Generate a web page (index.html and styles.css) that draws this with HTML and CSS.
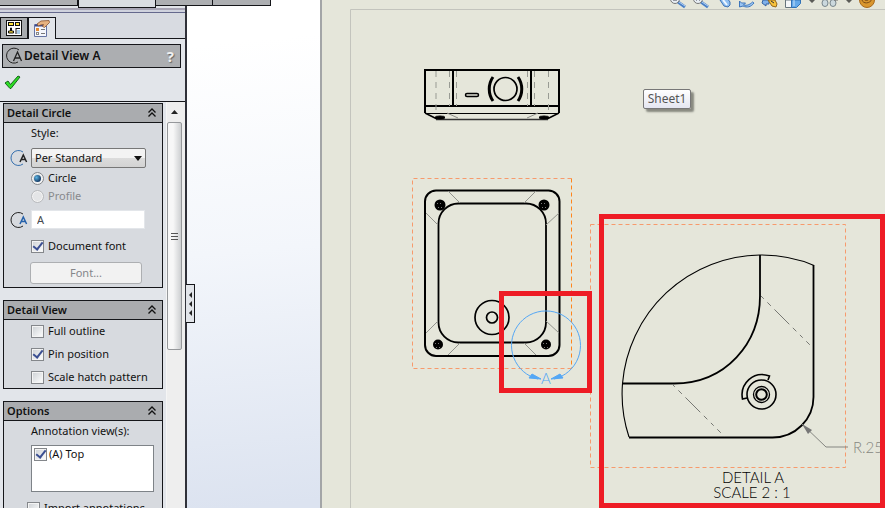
FILE: index.html
```html
<!DOCTYPE html>
<html lang="en">
<head>
<meta charset="utf-8">
<title>Detail View A</title>
<link rel="stylesheet" href="styles.css">
</head>
<body>
<div class="app">
  <nav class="ribbon" aria-label="Command tabs">
    <button class="rtab w78" aria-label="Command tab 1"></button>
    <button class="rtab active w78" aria-label="Command tab 2"></button>
    <button class="rtab w56" aria-label="Command tab 3"></button>
    <button class="rtab w58" aria-label="Command tab 4"></button>
  </nav>
  <aside class="side">
    <div class="stripe"></div>
    <div class="tabs">
      <button class="tab" aria-label="Feature tree">
        <svg width="16" height="16" viewBox="0 0 16 16"><rect x=".5" y=".5" width="15" height="15" fill="#fff" stroke="#111"/><rect x="2.500" y="2.500" width="5" height="3" fill="#ffe23a" stroke="#111"/><rect x="9.500" y="2.500" width="4" height="3" fill="#ffe23a" stroke="#111"/><path d="M4.500 8v3h-2v2h5v-2h-2V8z" fill="#ffe23a" stroke="#111"/><path d="M10 8.500h4M10 8v6" stroke="#111"/><rect x="11" y="10" width="3" height="4" fill="#a9cbe8"/></svg>
      </button>
      <button class="tab on" aria-label="Property manager">
        <svg width="18" height="18" viewBox="0 0 18 18"><path d="M1.500 4.500h12v12h-12z" fill="#f4f6fc" stroke="#6674a4"/><path d="M2 5.500h11" stroke="#39488d" stroke-width="2"/><rect x="3" y="8" width="3" height="3" fill="#e38b32"/><rect x="3.500" y="12.500" width="2" height="2" fill="#fff" stroke="#888"/><path d="M8 9.500h4M8 13.500h4" stroke="#777"/><path d="M4 4l4-3 8-.5.500 2-3 3-2 2-2-1 1-2-3 .5-2 1z" fill="#e7b27f" stroke="#88502e" stroke-width=".8"/></svg>
      </button>
      <div class="tabline"></div>
    </div>
    <header class="title">
      <svg width="18" height="18" viewBox="0 0 18 18"><path d="M14 3A7.500 7.500 0 1 0 13 15" fill="none" stroke="#222"/><path d="M8.500 14l4-9 4 9M10 11h5" fill="none" stroke="#222" stroke-width="1.300"/></svg>
      <h1>Detail View A</h1>
      <button class="help" aria-label="Help">?</button>
    </header>
    <button class="ok" aria-label="OK"><svg width="17" height="15" viewBox="0 0 17 15"><path d="M1 8l3-2 2.500 3.500L14 1l2 1L7 13.500H6z" fill="#2ddf25" stroke="#16651b"/></svg></button>
    <div class="scroller">
      <div class="groups">
        <section class="group">
          <h2>Detail Circle <svg class="chev" width="8" height="10" viewBox="0 0 8 10"><path d="M.5 4.500L4 1l3.500 3.500M.5 8.500L4 5l3.500 3.500"/></svg></h2>
          <div class="body circle">
            <label class="label" for="style">Style:</label>
            <div class="field">
              <svg width="20" height="18" viewBox="0 0 20 18"><path d="M14 3A7.500 7.500 0 1 0 14 15" fill="none" stroke="#356fae"/><path d="M11 13l3.300-7 3.300 7M12.500 10.500h4" fill="none" stroke="#222" stroke-width="1.500"/></svg>
              <span class="select"><select id="style"><option>Per Standard</option></select></span>
            </div>
            <label class="check"><input type="radio" name="shape" checked>Circle</label>
            <label class="check off"><input type="radio" name="shape" disabled>Profile</label>
            <div class="field name">
              <svg width="20" height="18" viewBox="0 0 20 18"><path d="M14 3A7.500 7.500 0 1 0 14 15" fill="none" stroke="#222"/><path d="M11 13l3.300-7 3.300 7M12.500 10.500h4" fill="none" stroke="#2460aa" stroke-width="1.500"/></svg>
              <input class="text" type="text" value="A" aria-label="Detail label">
            </div>
            <label class="check doc"><input type="checkbox" checked>Document font</label>
            <button class="font" disabled>Font...</button>
          </div>
        </section>
        <section class="group">
          <h2>Detail View <svg class="chev" width="8" height="10" viewBox="0 0 8 10"><path d="M.5 4.500L4 1l3.500 3.500M.5 8.500L4 5l3.500 3.500"/></svg></h2>
          <div class="body view">
            <label class="check"><input type="checkbox">Full outline</label>
            <label class="check"><input type="checkbox" checked>Pin position</label>
            <label class="check"><input type="checkbox">Scale hatch pattern</label>
          </div>
        </section>
        <section class="group">
          <h2>Options <svg class="chev" width="8" height="10" viewBox="0 0 8 10"><path d="M.5 4.500L4 1l3.500 3.500M.5 8.500L4 5l3.500 3.500"/></svg></h2>
          <div class="body options">
            <div class="label">Annotation view(s):</div>
            <div class="list"><label class="check"><input type="checkbox" checked>(A) Top</label></div>
            <label class="check import"><input type="checkbox">Import annotations</label>
          </div>
        </section>
      </div>
      <div class="bar">
        <svg class="up" width="7" height="4" viewBox="0 0 7 4"><path d="M0 4l3.500-4L7 4z" fill="#222"/></svg>
        <div class="thumb"><i></i><i></i><i></i></div>
      </div>
    </div>
  </aside>
  <main class="work">
    <button class="handle" aria-label="Collapse panel"><i></i><i></i><i></i></button>
    <div class="sheet">
      <svg class="drawing" width="565" height="508" viewBox="320 0 565 508">
        <path d="M350.500 508V9.500H885" fill="none" stroke="#c3c4bd"/>
        <g fill="none" stroke-width="1">
          <g><path d="M678 2l7 5" stroke="#4a80c8" stroke-width="3"/><path d="M679 2l6 4" stroke="#b7d3f2"/><circle cx="675" cy="-1" r="4.500" fill="#e8eef4" stroke="#777"/><path d="M673 0h4" stroke="#445"/></g>
          <g><path d="M701 2l7 5" stroke="#4a80c8" stroke-width="3"/><path d="M702 2l6 4" stroke="#b7d3f2"/><circle cx="698" cy="-1" r="4.500" fill="#e8eef4" stroke="#777"/><path d="M696 0h1M699 0h1" stroke="#445"/></g>
          <path d="M720 0l4 6 4 1 2-2v-3l-3-4z" fill="#8fbff2" stroke="#3f72b4"/><path d="M723 0l4 5" stroke="#eef6ff" stroke-width="2"/>
          <path d="M739.500 7V1l2 2h4l-2 2c4 1 7-1 9-3l1.500 1c-3 4-7 5-11 3z" fill="#9ac5f3" stroke="#3f76bb"/>
          <path d="M763 0l-1 3 4 3v-2h3V0z" fill="#7fb0ea" stroke="#3563a3"/><path d="M768 0l4 6 4 1 1-3-2-4z" fill="#f7c23b" stroke="#94661a"/><path d="M771 1l3 2" stroke="#333"/>
          <path d="M785.500 0v7.500h10V0z" fill="#f4f6f8" stroke="#67747c"/><path d="M791.500 0v7.500h5l4-4V0z" fill="#64a8e9" stroke="#3272b6"/><path d="M794 0v6" stroke="#c5e1fa"/>
          <path d="M809 0h6l-3 3zM846 0h6l-3 3z" fill="#5b5b57"/>
          <ellipse cx="825" cy="3" rx="3" ry="3.500" fill="#cbd8dd" stroke="#78858b"/><ellipse cx="833" cy="3" rx="3" ry="3.500" fill="#cbd8dd" stroke="#78858b"/><path d="M834 0h4" stroke="#666"/>
          <circle cx="867" cy="0" r="7.500" fill="#d9962e" stroke="#a96a1d"/><path d="M862 0c1 4 8 4 10-1M864-1c1 2 4 2 5 0" stroke="#7d4c16"/>
        </g>
        <g fill="none" stroke="#000" stroke-width="2">
          <path d="M425 113V70h134v43M425 106h134M453 70v36M531 70v36"/>
          <path d="M425 113l12 6M559 113l-12 6" stroke-width="1.500"/>
          <path d="M436 119.500h112" stroke="#333" stroke-width="1.300"/>
          <path d="M425 113.500h134" stroke-width="1"/>
          <path d="M436 71v42M449.500 71v35M456.500 71v35M527.500 71v35M534.500 71v35M548.500 71v42" stroke="#999b94" stroke-width="1" stroke-dasharray="6 5"/>
          <path d="M447 113l11 5M538 113l-11 5" stroke="#8b8c87" stroke-width="1"/>
          <ellipse cx="440" cy="117.500" rx="5" ry="1.500" fill="#000" stroke-width="1"/><ellipse cx="544" cy="117.500" rx="5" ry="1.500" fill="#000" stroke-width="1"/>
          <rect x="465.500" y="93.500" width="13" height="3" rx="1.500" stroke-width="1.500"/>
          <circle cx="505.500" cy="89" r="11.500" stroke-width="1.700"/>
          <path d="M493 77c-5 7-5 17 0 24M518 77c5 7 5 17 0 24" stroke-width="3"/>
        </g>
        <g fill="none" stroke-width="1" stroke="#f79a6c" stroke-dasharray="4 3"><path d="M571.500 178.500h-159v190h159"/><rect x="590.500" y="224.500" width="255" height="243"/></g>
        <path d="M571.500 178.500v190" stroke="#ff851b" stroke-dasharray="4 3"/>
        <g fill="none" stroke="#000" stroke-width="2">
          <rect x="425" y="190.500" width="134.500" height="165.500" rx="11"/>
          <rect x="438.500" y="203.500" width="107.500" height="139" rx="20" stroke-width="1.800"/>
          <circle cx="492" cy="317.500" r="17" stroke-width="1.700"/><circle cx="492" cy="317.500" r="5.500" stroke-width="1.700"/>
          <path d="M448 191l12 12M426 213l12 12M536 191l-12 12M559 213l-13 12M426 333l12-12M448 355l12-12M559 333l-13-12M536 355l-12-12" stroke="#92938d" stroke-width="1"/>
        </g>
        <g><circle cx="440" cy="205" r="5.500"/><circle cx="544" cy="205" r="5.500"/><circle cx="438" cy="344.500" r="5"/><circle cx="546" cy="344.500" r="5"/></g>
        <g fill="none" stroke="#777" stroke-dasharray="1 2"><path d="M437 203.500h6M438 207.500h6M541 203.500h6M542 207.500h6M435 343.500h6M436 347.500h6M543 343.500h6M544 347.500h6"/></g>
        <g fill="none" stroke="#000" stroke-width="2">
          <path d="M629 437A137 137 0 0 1 622.500 383.500M622.500 383.500A140 140 0 0 1 760 255Q790 255 814 265.500" stroke-width="1.100"/>
          <path d="M760 255v41c0 47-34 87.500-86 87.500h-51.500M813.500 265v132c0 22-18 40.500-41 40.500H629" stroke-width="1.800"/>
          <path d="M761 296l52 52M672 384l53 53" stroke="#777873" stroke-width="1" stroke-dasharray="4 5 5 5 21 5 5 5"/>
          <circle cx="761.500" cy="394.500" r="14.500" stroke-width="1.600"/><circle cx="761.500" cy="394.500" r="8" stroke-width="1.300"/><circle cx="761.500" cy="394.500" r="5.300" stroke-width="2"/>
          <path d="M747 398l-4.500 1c-3-15 11-29 27-23l-1.500 4" stroke-width="1.600"/>
        </g>
        <path d="M802 424l24 23h22" fill="none" stroke="#858681"/><path d="M802 424l10 6-4 4z" fill="#777"/>
        <g fill="none" stroke="#54a7f5"><path d="M538 379A34.500 34.500 0 1 1 554 379"/><path d="M529 378l12 1-9-5zM563 378l-12 1 9-5z" fill="#54a7f5"/></g>
        <g class="cad" text-anchor="middle"><text class="blue" x="546" y="384">A</text><text x="753" y="483">DETAIL A</text><text x="752" y="498">SCALE 2 : 1</text><text class="dim" x="868" y="453">R.25</text></g>
        <g fill="none" stroke="#ee1c25" stroke-width="5"><rect x="501.500" y="293.500" width="88" height="97"/><rect x="601.500" y="216.500" width="281" height="289"/></g>
      </svg>
      <div class="tip" role="tooltip">Sheet1</div>
    </div>
  </main>
</div>
</body>
</html>
```
FILE: styles.css
```css
* { box-sizing: border-box; }
body { margin: 0; font: 11px/16px "Noto Sans", "Open Sans", sans-serif; color: #111; }
button, input, select { font: inherit; color: inherit; margin: 0; padding: 0; }
button { border: 0; background: none; }
.app { position: relative; display: flex; height: 100vh; overflow: hidden; }

.ribbon { position: absolute; z-index: 2; top: 0; left: 0; display: flex; align-items: flex-start; }
.rtab { height: 6px; background: #adafb2; border: solid #15161a; border-width: 0 1px 1px 0; }
.rtab.active { height: 8px; background: #dadde2; border-left-width: 1px; }
.w78 { width: 78px; }
.w56 { width: 57px; }
.w58 { width: 58px; }

.side { display: flex; flex-direction: column; flex: none; width: 187px; padding-top: 8px; background: #e2e5ea; border-right: 2px solid #303139; }
.stripe { flex: none; height: 5px; border: solid #65698d; border-width: 2px 0 1px; border-top-color: #a7a4b4; background: #d0d3de; }
.tabs { display: flex; flex: none; height: 26px; padding-top: 4px; background: #d8dbe1; }
.tab { display: grid; place-items: center; width: 28px; background: #a8abae; border: 1px solid #15161a; }
.tab.on { background: #e2e5ea; border-bottom: 0; }
.tabline { flex: 1; border-bottom: 1px solid #15161a; }
.title { display: flex; flex: none; align-items: center; gap: 1px; height: 24px; margin: 5px 4px 0 2px; padding: 0 6px 0 2px; background: #acaeb1; border: 1px solid #15161a; }
h1 { flex: 1; margin: 0; font-size: 12px; font-weight: 600; white-space: nowrap; }
.help { color: #f0f0f0; font-size: 15px; font-weight: 700; text-shadow: 1px 1px 1px #666; }
.ok { flex: none; height: 15px; margin: 7px 4px 11px; text-align: left; }
.ok svg { display: block; }
.scroller { display: flex; flex: 1; min-height: 0; border-top: 1px solid #15161a; overflow: hidden; }
.groups { flex: 1; padding: 1px 0 0 3px; }
.group { width: 160px; margin-bottom: 12px; background: #d7dadf; border: 1px solid #15161a; }
h2 { display: flex; align-items: center; justify-content: space-between; height: 19px; margin: 0; padding: 0 6px 0 3px; background: #aaacaf; border-bottom: 1px solid #15161a; font-size: 11px; font-weight: 600; }
.chev path { fill: none; stroke: #111; stroke-width: 1.3; }
.body { display: flex; flex-direction: column; padding-left: 27px; }
.label { height: 16px; }
.circle { padding-top: 2px; padding-bottom: 3px; }
.field { display: flex; align-items: center; gap: 2px; height: 21px; margin: 6px 0 1px -22px; }
.select { position: relative; }
.select::after { content: ""; position: absolute; right: 4px; top: 8px; border: 4px solid transparent; border-top: 5px solid #111; border-bottom: 0; pointer-events: none; }
select { appearance: none; display: block; width: 115px; height: 20px; padding-left: 3px; border: 1px solid #777; border-radius: 2px; background: linear-gradient(#f3f3f3 50%, #dcdcdc 50%, #d3d3d3); }
.check { display: flex; align-items: center; gap: 4px; height: 18px; white-space: nowrap; }
.check input { appearance: none; display: grid; place-items: center; flex: none; width: 13px; height: 13px; border: 1px solid #84878b; background: linear-gradient(135deg, #ccd0d4, #fff); box-shadow: inset 0 0 0 1px #f4f4f4; }
.check [type=radio] { border-radius: 50%; }
.check [type=radio]:checked::after { content: ""; width: 7px; height: 7px; border-radius: 50%; background: radial-gradient(circle at 35% 35%, #5db5e4, #143c68 70%); }
.check [type=checkbox]:checked::after { content: ""; width: 4px; height: 8px; margin-top: -2px; border: solid #3b4f92; border-width: 0 2px 2px 0; transform: rotate(38deg); }
.off { color: #87898d; }
.off input { border-color: #b8babd; background: #e4e5e7; }
.name { margin-top: 4px; }
.text { width: 114px; height: 19px; padding-left: 5px; border: 1px solid #e3e6ea; background: #fff; color: #45484c; }
.doc { margin-top: 6px; }
.font { width: 112px; height: 22px; margin: 7px 0 0 -1px; border: 1px solid #adafb2; border-radius: 3px; background: #f2f2f2; color: #85868a; }
.view { gap: 5px; padding-top: 2px; padding-bottom: 2px; }
.options { padding-top: 2px; padding-bottom: 9px; }
.list { width: 123px; height: 47px; margin-top: 6px; padding-left: 2px; background: #fff; border: 1px solid #7e8388; }
.list .check { gap: 2px; height: 16px; }
.import { margin: 7px 0 0 -4px; }
.bar { display: flex; flex-direction: column; align-items: center; flex: none; width: 19px; padding: 8px 4px 0 0; background: #eee; border-left: 1px solid #f5f5f5; }
.up { flex: none; margin-bottom: 8px; }
.thumb { display: flex; flex-direction: column; align-items: center; justify-content: center; gap: 2px; flex: none; width: 15px; height: 228px; border: 1px solid #96989b; border-radius: 2px; background: linear-gradient(90deg, #f7f7f7 40%, #cdcfd1); }
.thumb i { width: 7px; height: 1px; background: #555; }

.work { position: relative; display: flex; flex: 1; min-width: 0; padding-left: 133px; background: linear-gradient(175deg, #fff 8%, #f3f6fb 45%, #dce3f0 90%); }
.handle { position: absolute; left: -1px; top: 284px; display: flex; flex-direction: column; align-items: center; justify-content: center; gap: 3px; width: 9px; height: 39px; background: #e2e5ea; border: 1px solid #15161a; border-left: 0; }
.handle i { border: 3px solid transparent; border-right: 3px solid #222; border-left: 0; }
.sheet { position: relative; flex: 1; min-width: 0; background: #e5e6da; border-left: 2px solid #a3a5a7; overflow: hidden; }
.drawing { display: block; margin-left: -2px; }
.cad { font: 300 15px Lato, sans-serif; fill: #000; }
.cad .blue { fill: #54a7f5; }
.cad .dim { fill: #858681; }
.tip { position: absolute; left: 321px; top: 89px; width: 48px; height: 20px; border: 1px solid #777; border-radius: 2px; background: linear-gradient(#fff, #e4e6f1); box-shadow: 3px 3px 2px #888980; color: #555; font-size: 12px; line-height: 18px; text-align: center; }
```
